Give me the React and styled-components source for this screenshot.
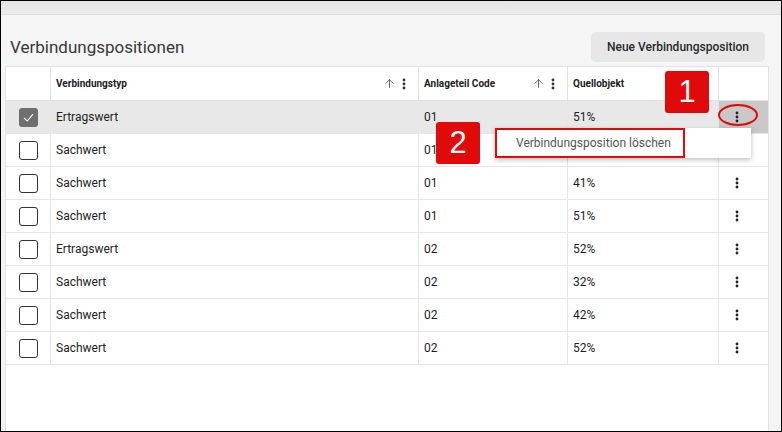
import styled, { createGlobalStyle } from "styled-components";
import { ArrowUp } from "lucide-react";

const rows = [
  { typ: "Ertragswert", code: "01", quelle: "51%", selected: true },
  { typ: "Sachwert", code: "01", quelle: "" },
  { typ: "Sachwert", code: "01", quelle: "41%" },
  { typ: "Sachwert", code: "01", quelle: "51%" },
  { typ: "Ertragswert", code: "02", quelle: "52%" },
  { typ: "Sachwert", code: "02", quelle: "32%" },
  { typ: "Sachwert", code: "02", quelle: "42%" },
  { typ: "Sachwert", code: "02", quelle: "52%" },
];

const Kebab = ({ color = "#333" }) => (
  <svg width="4" height="12" viewBox="0 0 4 12">
    <circle cx="2" cy="2" r="1.4" fill={color} />
    <circle cx="2" cy="6" r="1.4" fill={color} />
    <circle cx="2" cy="10" r="1.4" fill={color} />
  </svg>
);

const Check = () => (
  <svg width="13" height="13" viewBox="0 0 13 13">
    <path d="M2 6.8 L5.2 10 L11 3.2" stroke="#fff" strokeWidth="1.1" fill="none" />
  </svg>
);

const App = () => {
  return (
    <Frame>
      <GlobalStyle />
      <TopBand />
      <TitleRow>
        <Title>Verbindungspositionen</Title>
        <PrimaryButton>Neue Verbindungsposition</PrimaryButton>
      </TitleRow>
      <Table>
        <HeaderRow>
          <HeadCell />
          <HeadCell>
            <HeadLabel>Verbindungstyp</HeadLabel>
            <HeadTools>
              <ArrowUp size={13} strokeWidth={1.6} color="#555" />
              <Kebab color="#333" />
            </HeadTools>
          </HeadCell>
          <HeadCell>
            <HeadLabel>Anlageteil Code</HeadLabel>
            <HeadTools>
              <ArrowUp size={13} strokeWidth={1.6} color="#555" />
              <Kebab color="#333" />
            </HeadTools>
          </HeadCell>
          <HeadCell>
            <HeadLabel>Quellobjekt</HeadLabel>
          </HeadCell>
          <HeadCell $last />
        </HeaderRow>
        {rows.map((r, i) => (
          <BodyRow key={i} $selected={r.selected}>
            <CheckCell>
              <Box $checked={r.selected}>{r.selected && <Check />}</Box>
            </CheckCell>
            <Cell>{r.typ}</Cell>
            <Cell>{r.code}</Cell>
            <Cell>{r.quelle}</Cell>
            <ActionCell $active={r.selected}>
              <Kebab color="#222" />
            </ActionCell>
          </BodyRow>
        ))}
      </Table>

      <Badge $x={664} $y={70}>1</Badge>
      <Ring />
      <Badge $x={435} $y={121}>2</Badge>
      <Menu>
        <MenuItem>Verbindungsposition löschen</MenuItem>
      </Menu>
    </Frame>
  );
};

export default App;

const GlobalStyle = createGlobalStyle`
  html, body {
    margin: 0;
    padding: 0;
    background: #fff;
  }
  * {
    box-sizing: border-box;
  }
`;

const Frame = styled.div`
  position: relative;
  width: 782px;
  height: 432px;
  border: 1px solid #000;
  background: #f5f5f5;
  font-family: Roboto, "Liberation Sans", sans-serif;
  color: #222;
  display: flex;
  flex-direction: column;
  overflow: hidden;
`;

const TopBand = styled.div`
  height: 14px;
  flex-shrink: 0;
  background: linear-gradient(#e4e4e4, #ececec);
  border-bottom: 1px solid #dcdcdc;
`;

const TitleRow = styled.div`
  height: 51px;
  flex-shrink: 0;
  display: flex;
  align-items: center;
  justify-content: space-between;
  padding: 13px 16px 0 9px;
`;

const Title = styled.h1`
  margin: 0;
  font-size: 17px;
  font-weight: 400;
  color: #383838;
`;

const PrimaryButton = styled.button`
  width: 174px;
  height: 30px;
  border: none;
  border-radius: 5px;
  background: #e7e7e7;
  font-family: Roboto, "Liberation Sans", sans-serif;
  font-size: 12px;
  font-weight: 500;
  color: #2a2a2a;
  padding: 0;
`;

const Table = styled.div`
  flex: 1;
  width: 764px;
  margin-left: 4px;
  background: #fff;
  border: 1px solid #e2e2e2;
  border-bottom: none;
`;

const columns = "45px 368px 149px 151px 49px";

const HeaderRow = styled.div`
  display: grid;
  grid-template-columns: ${columns};
  height: 34px;
  border-bottom: 1px solid #e2e2e2;
`;

const HeadCell = styled.div`
  display: flex;
  align-items: center;
  justify-content: space-between;
  padding: 0 12px 0 5px;
  border-right: ${(p) => (p.$last ? "none" : "1px solid #e2e2e2")};
`;

const HeadLabel = styled.span`
  font-size: 10px;
  font-weight: 700;
  color: #222;
`;

const HeadTools = styled.span`
  display: flex;
  align-items: center;
  gap: 6px;
`;

const BodyRow = styled.div`
  display: grid;
  grid-template-columns: ${columns};
  height: 33px;
  border-bottom: 1px solid #e6e6e6;
  background: ${(p) => (p.$selected ? "#e8e8e8" : "#fff")};
`;

const Cell = styled.div`
  display: flex;
  align-items: center;
  padding-left: 5px;
  font-size: 12px;
  color: #1e1e1e;
  border-right: 1px solid #e6e6e6;
`;

const CheckCell = styled(Cell)`
  justify-content: center;
  padding: 0 0 0 1px;
`;

const Box = styled.span`
  width: 19px;
  height: 19px;
  border-radius: 3px;
  display: flex;
  align-items: center;
  justify-content: center;
  border: ${(p) => (p.$checked ? "none" : "1.5px solid #333")};
  background: ${(p) => (p.$checked ? "#6f6f6f" : "#fff")};
`;

const ActionCell = styled.div`
  display: flex;
  align-items: center;
  padding-left: 16px;
  background: ${(p) => (p.$active ? "#c8c8c8" : "transparent")};
`;

const Badge = styled.div`
  position: absolute;
  left: ${(p) => p.$x}px;
  top: ${(p) => p.$y}px;
  width: 44px;
  height: 42px;
  border-radius: 3px;
  background: #e10a0a;
  color: #fff;
  font-family: "Liberation Sans", Arial, sans-serif;
  font-size: 31px;
  display: flex;
  align-items: center;
  justify-content: center;
`;

const Ring = styled.div`
  position: absolute;
  left: 717px;
  top: 103px;
  width: 40px;
  height: 22px;
  border: 2px solid #e10a0a;
  border-radius: 50%;
`;

const Menu = styled.div`
  position: absolute;
  left: 494px;
  top: 127px;
  width: 256px;
  height: 30px;
  background: #fff;
  box-shadow: 0 2px 5px rgba(0, 0, 0, 0.25);
  display: flex;
`;

const MenuItem = styled.div`
  width: 190px;
  height: 100%;
  border: 2px solid #e10a0a;
  display: flex;
  align-items: center;
  padding-left: 19px;
  font-size: 12px;
  color: #555;
`;
